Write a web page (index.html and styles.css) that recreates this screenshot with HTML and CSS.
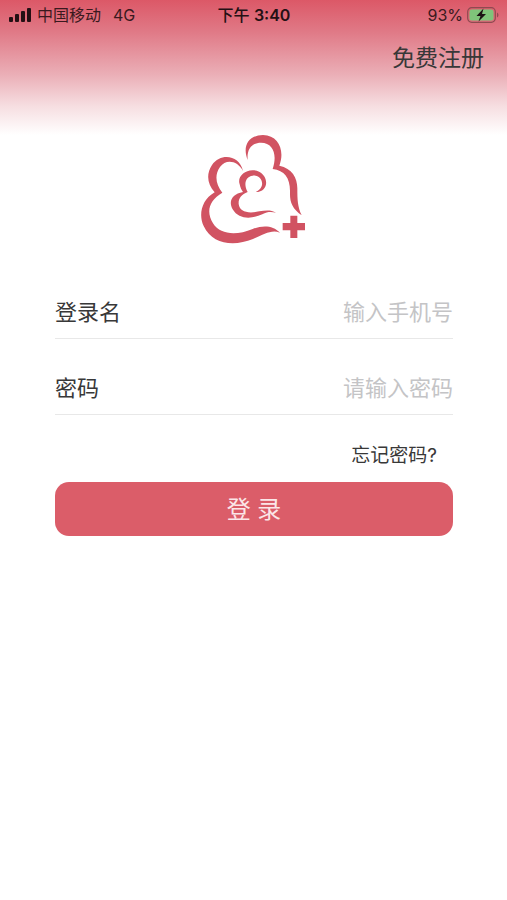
FILE: index.html
```html
<!DOCTYPE html>
<html lang="zh-CN">
<head>
<meta charset="utf-8">
<meta name="viewport" content="width=device-width, initial-scale=1">
<title>登录</title>
<link rel="stylesheet" href="styles.css">
</head>
<body>
<header class="top">
  <div class="status">
    <div class="carrier">
      <svg class="signal" viewBox="0 0 24 14" aria-hidden="true">
        <rect x="0" y="9" width="4" height="5" rx="1"/>
        <rect x="6" y="6" width="4" height="8" rx="1"/>
        <rect x="12" y="3" width="4" height="11" rx="1"/>
        <rect x="18" y="0" width="4" height="14" rx="1"/>
      </svg>
      <span>中国移动</span>
      <span class="network">4G</span>
    </div>
    <div class="time">下午 <span class="clock">3:40</span></div>
    <div class="power">
      <span>93%</span>
      <svg class="battery" viewBox="0 0 32 16" aria-hidden="true">
        <rect x="0.7" y="0.7" width="27.6" height="14.6" rx="4" fill="none" stroke="#8f4a50" stroke-width="1.2"/>
        <rect x="2.5" y="2.5" width="24" height="11" rx="2.5" fill="#7fc47a"/>
        <path d="M30 5.5v5q1.500-.6 1.500-2.500T30 5.500z" fill="#8f4a50"/>
        <path d="M16.500 1.500 9.500 9h4l-2 5.500 7.500-7.500h-4z" fill="#1c1214"/>
      </svg>
    </div>
  </div>
  <nav class="nav"><a class="register" href="#register">免费注册</a></nav>
</header>
<main class="main">
  <svg class="logo" viewBox="0 0 390 390" role="img" aria-label="标志">
    <path d="M176 105C160 66 176 31 222 30C270 31 288 78 271 122C309 130 325 158 325 190C325 225 326 246 338 271C310 250 302 232 303 201C304 160 287 136 251 132C265 91 254 53 216 53C187 53 173 73 176 105Z"/>
    <path d="M162 138C152 91 96 82 69 120C50 149 56 178 77 202C37 225 28 270 44 303C70 359 135 365 192 342C225 329 246 313 273 323C252 301 221 300 191 312C143 332 94 330 72 295C50 259 61 226 100 203C80 177 76 150 93 126C111 101 146 107 162 138Z"/>
    <path d="M200 201C238 201 241 158 212 141C180 124 142 150 152 178C154 187 157 195 162 201C130 207 117 228 131 253C150 286 192 281 220 268C235 260 246 260 261 263C246 254 230 256 211 259C176 267 152 260 149 237C148 220 157 208 176 201C163 178 169 155 191 152C221 149 232 188 200 201Z"/>
    <path d="M304 272h21v22h23v22h-23v23h-21v-23h-23v-22h23z"/>
  </svg>
  <form class="form">
    <div class="field">
      <label for="login">登录名</label>
      <input id="login" type="tel" placeholder="输入手机号">
    </div>
    <div class="field">
      <label for="password">密码</label>
      <input id="password" type="password" placeholder="请输入密码">
    </div>
    <a class="forgot" href="#forgot">忘记密码?</a>
    <button class="submit" type="submit">登 录</button>
  </form>
</main>
</body>
</html>
```
FILE: styles.css
```css
* {
  box-sizing: border-box;
}

body {
  margin: 0;
  background: #fff;
  color: #383838;
  font-family: Inter, "Noto Sans CJK SC", sans-serif;
}

a {
  color: inherit;
  text-decoration: none;
}

.top {
  height: 135px;
  background: linear-gradient(#dc5867 0%, #e07a87 24%, #ebb0b8 56%, #f6dde0 78%, #fff 100%);
}

.status {
  display: grid;
  grid-template-columns: 1fr auto 1fr;
  align-items: center;
  height: 30px;
  padding: 0 8px 0 9px;
  color: #3a191e;
  font-size: 16px;
  line-height: 24px;
}

.carrier,
.power {
  display: flex;
  align-items: center;
  gap: 4px;
}

.power {
  justify-content: flex-end;
}

.signal {
  width: 24px;
  height: 14px;
  fill: #241014;
}

.network {
  margin-left: 8px;
}

.time {
  color: #241014;
  font-weight: 500;
}

.clock {
  font-weight: 600;
}

.battery {
  width: 32px;
  height: 16px;
}

.nav {
  display: flex;
  justify-content: flex-end;
  padding: 11px 23px 0;
}

.register {
  font-size: 23px;
  line-height: 34px;
}

.main {
  display: flex;
  flex-direction: column;
  padding: 0 54px 0 55px;
}

.logo {
  align-self: center;
  width: 130px;
  height: 130px;
  margin-top: -10px;
  fill: #d15362;
}

.form {
  display: flex;
  flex-direction: column;
  margin-top: 8px;
}

.field {
  display: flex;
  align-items: flex-end;
  height: 76px;
  padding-bottom: 10px;
  border-bottom: 1px solid #e8e8e8;
  font-size: 22px;
  line-height: 32px;
}

.field input {
  flex: 1;
  min-width: 0;
  height: 32px;
  padding: 0;
  border: 0;
  outline: 0;
  background: transparent;
  color: inherit;
  font: inherit;
  text-align: right;
}

.field input::placeholder {
  color: #c4c4c6;
}

.forgot {
  align-self: flex-end;
  margin: 27px 16px 0 0;
  font-size: 19px;
  line-height: 28px;
}

.submit {
  height: 54px;
  margin-top: 12px;
  padding: 0 0 4px;
  border: 0;
  border-radius: 14px;
  background: #db5d69;
  color: #fbe6e8;
  font: inherit;
  font-size: 24px;
}
```
